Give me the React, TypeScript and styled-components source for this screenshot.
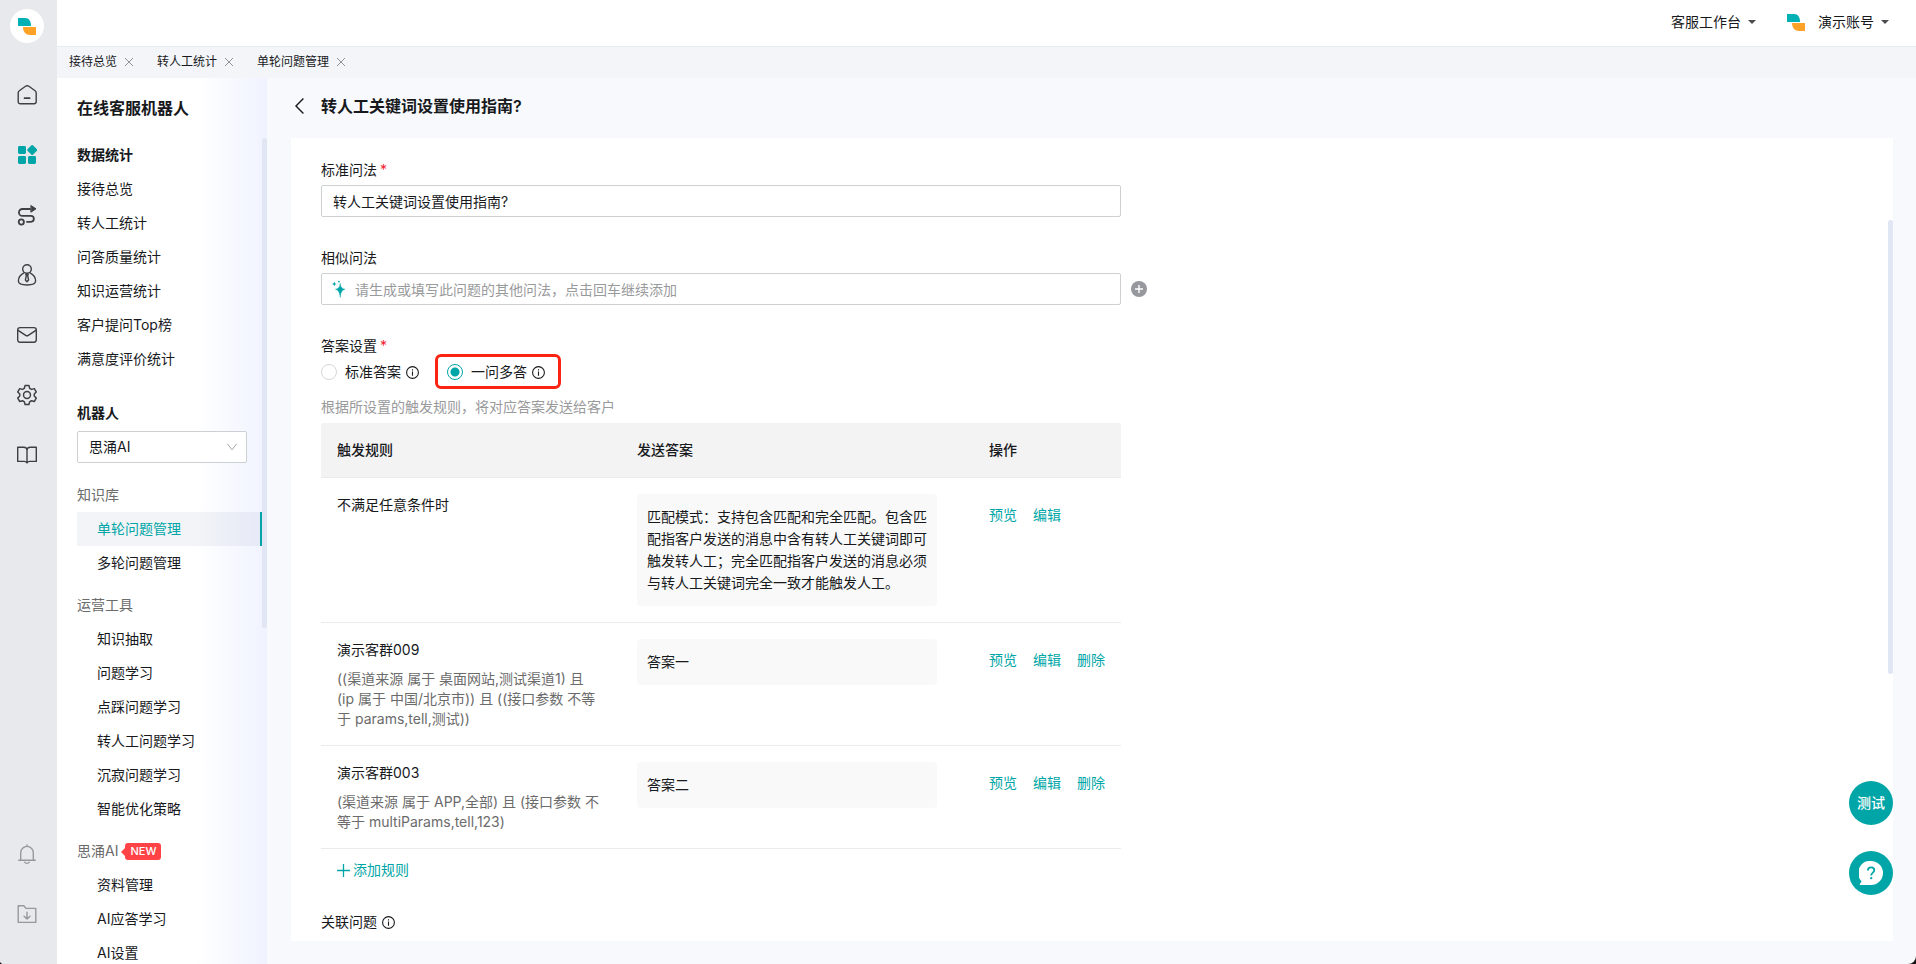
import React, { useState } from 'react';
import styled, { createGlobalStyle, css } from 'styled-components';

const color = {
  teal: '#00a6a7',
  text: '#17191c',
  muted: '#6b6b6b',
  faint: '#999a9c',
  border: '#ccd0d2',
  line: '#ebebeb',
};

const GlobalStyle = createGlobalStyle`
  * { box-sizing: border-box; }
  html { background: #1c1416; }
  body {
    margin: 0;
    font-family: Inter, 'Noto Sans CJK SC', sans-serif;
    font-size: 14px;
    line-height: 22px;
    color: ${color.text};
  }
  button, input, select { font: inherit; color: inherit; }
  button { padding: 0; border: 0; background: none; cursor: pointer; }
  a { color: inherit; text-decoration: none; }
  h1, h2, h3, p, ul { margin: 0; padding: 0; font-weight: inherit; font-size: inherit; }
  ul { list-style: none; }
`;

const Shell = styled.div`
  display: flex;
  height: 100vh;
  overflow: hidden;
  border-radius: 0 0 8px 4px;
  background: #f8f9fc;
`;

/* ---------- icon rail ---------- */

const Rail = styled.nav`
  display: flex;
  flex-direction: column;
  align-items: center;
  flex: 0 0 57px;
  padding: 9px 3px 0 0;
  background: #e8e9ed;
  color: #3d3f42;
`;

const Avatar = styled.a`
  display: grid;
  place-items: center;
  width: 34px;
  height: 34px;
  margin-bottom: 22px;
  border-radius: 50%;
  background: #fff;
`;

const RailLink = styled.a<{ $active?: boolean; $dim?: boolean }>`
  display: grid;
  place-items: center;
  width: 54px;
  height: 60px;
  ${(p) => p.$active && css`color: ${color.teal};`}
  ${(p) => p.$dim && css`color: #96989c;`}
`;

const RailSpacer = styled.div`
  flex: 1;
`;

const RailBottom = styled.div`
  padding-bottom: 20px;
`;

/* ---------- top area ---------- */

const Body = styled.div`
  display: flex;
  flex: 1;
  flex-direction: column;
  min-width: 0;
`;

const Header = styled.header`
  display: flex;
  flex: 0 0 46px;
  align-items: center;
  justify-content: flex-end;
  gap: 31px;
  padding: 0 27px 2px 0;
  background: #fff;
`;

const HeaderButton = styled.button`
  display: flex;
  align-items: center;
  gap: 7px;

  > span { margin-left: 6px; }
`;

const TabBar = styled.div`
  display: flex;
  flex: 0 0 32px;
  align-items: center;
  gap: 24px;
  padding: 0 12px 2px;
  border-top: 1px solid #e6ebf0;
  background: #f4f5f8;
  font-size: 12px;
  line-height: 20px;
`;

const Tab = styled.div`
  display: flex;
  align-items: center;
  gap: 8px;
`;

const CloseButton = styled.button`
  display: flex;
  color: #909399;
`;

const Columns = styled.div`
  display: flex;
  flex: 1;
  min-height: 0;
`;

/* ---------- side menu ---------- */

const Side = styled.aside`
  display: flex;
  flex: 0 0 210px;
  flex-direction: column;
  background: linear-gradient(90deg, #fff 66%, #f0f3ff 100%);
`;

const SideTitle = styled.h2`
  padding: 0 20px;
  font-size: 16px;
  font-weight: 600;
  line-height: 60px;
`;

const ScrollArea = styled.div`
  position: relative;
  flex: 1;
  min-height: 0;
`;

const Scroller = styled.div`
  height: 100%;
  overflow-y: auto;
  scrollbar-width: none;
`;

const Thumb = styled.div<{ $top: string; $height: string }>`
  position: absolute;
  top: ${(p) => p.$top};
  right: 0;
  width: 5px;
  height: ${(p) => p.$height};
  border-radius: 3px;
  background: #e1e6f4;
`;

const Menu = styled.div`
  padding: 0 5px 0 20px;
`;

const MenuHeading = styled.h3<{ $strong?: boolean }>`
  display: flex;
  align-items: center;
  gap: 5px;
  height: 34px;
  color: ${(p) => (p.$strong ? color.text : color.muted)};
  font-weight: ${(p) => (p.$strong ? 600 : 400)};
`;

const MenuGroup = styled.section`
  margin-bottom: 8px;
`;

const RobotGroup = styled.section`
  padding: 12px 0 15px;
`;

const MenuItem = styled.a<{ $nested?: boolean; $active?: boolean }>`
  display: block;
  padding-left: ${(p) => (p.$nested ? 20 : 0)}px;
  line-height: 34px;
  ${(p) =>
    p.$active &&
    css`
      border-right: 2px solid ${color.teal};
      background: rgba(120, 130, 170, 0.09);
      color: ${color.teal};
    `}
`;

const NewBadge = styled.span`
  position: relative;
  margin-left: 2px;
  padding: 0 5px;
  border-radius: 3px;
  background: #ff4347;
  color: #fff;
  font-size: 11px;
  font-weight: 500;
  line-height: 17px;

  &::before {
    content: '';
    position: absolute;
    top: 5px;
    left: -4px;
    border: 4px solid transparent;
    border-left-width: 0;
    border-right-color: #ff4347;
  }
`;

const SelectBox = styled.div`
  display: grid;
  align-items: center;
  width: 170px;
  margin-top: 1px;

  > * { grid-area: 1 / 1; }
  > svg { justify-self: end; margin-right: 10px; color: #a3a6aa; pointer-events: none; }
`;

const Select = styled.select`
  width: 100%;
  height: 32px;
  padding: 0 11px;
  border: 1px solid ${color.border};
  border-radius: 2px;
  background: #fff;
  appearance: none;
`;

/* ---------- content ---------- */

const Main = styled.main`
  display: flex;
  flex: 1;
  flex-direction: column;
  min-width: 0;
  padding: 0 23px 23px 24px;
`;

const PageTitle = styled.div`
  display: flex;
  align-items: center;
  gap: 17px;
  height: 56px;
  margin-bottom: 4px;
  padding-left: 4px;
  font-size: 16px;
  font-weight: 600;
`;

const BackButton = styled.button`
  display: flex;
`;

const Panel = styled(ScrollArea)`
  background: #fff;
`;

const Form = styled.form`
  max-width: 860px;
  padding: 21px 30px 0;
`;

const Field = styled.div`
  display: flex;
  flex-direction: column;
  gap: 4px;
  margin-bottom: 30px;
`;

const Label = styled.label`
  display: flex;
  align-items: center;
  gap: 3px;
  padding: 0;
`;

const Star = styled.span`
  color: #f5222d;
`;

const InputRow = styled.div`
  position: relative;
  display: flex;
  align-items: center;
`;

const InputBox = styled.div`
  display: flex;
  align-items: center;
  gap: 8px;
  width: 100%;
  height: 32px;
  padding: 0 11px 0 10px;
  border: 1px solid ${color.border};
  border-radius: 2px;
`;

const TextInput = styled.input`
  flex: 1;
  min-width: 0;
  height: 28px;
  padding: 0 1px;
  border: 0;
  outline: 0;
  background: none;

  &::placeholder { color: ${color.faint}; opacity: 1; }
`;

const AddButton = styled.button`
  position: absolute;
  left: calc(100% + 10px);
  display: flex;
`;

const Fieldset = styled.fieldset`
  margin: 0;
  padding: 0;
  border: 0;
`;

const RadioRow = styled.div`
  display: flex;
  gap: 28px;
  padding: 4px 0 13px;
`;

const RadioLabel = styled.label<{ $marked?: boolean }>`
  position: relative;
  display: flex;
  align-items: center;
  gap: 8px;
  cursor: pointer;

  ${(p) =>
    p.$marked &&
    css`
      &::after {
        content: '';
        position: absolute;
        inset: -7px -16px -6px -12px;
        border: 3px solid #fb2413;
        border-radius: 6px;
        pointer-events: none;
      }
    `}
`;

const RadioText = styled.span`
  display: flex;
  align-items: center;
  gap: 5px;
`;

const Radio = styled.input`
  width: 16px;
  height: 16px;
  margin: 0;
  border: 1px solid #d4d6d8;
  border-radius: 50%;
  background: #fff;
  appearance: none;

  &:checked {
    border-color: ${color.teal};
    background: radial-gradient(circle, ${color.teal} 4px, #fff 5px);
  }
`;

const Hint = styled.p`
  padding-bottom: 5px;
  color: ${color.faint};
`;

const Table = styled.table`
  width: 100%;
  border-collapse: separate;
  border-spacing: 0;
  table-layout: fixed;
  text-align: left;
`;

const HeadCell = styled.th<{ $width?: number }>`
  width: ${(p) => (p.$width ? `${p.$width}px` : 'auto')};
  padding: 16px;
  border-bottom: 1px solid ${color.line};
  background: #f3f3f3;
  font-weight: 500;

  &:first-child { border-top-left-radius: 2px; }
  &:last-child { border-top-right-radius: 2px; }
`;

const Cell = styled.td`
  padding: 16px;
  border-bottom: 1px solid ${color.line};
  vertical-align: top;
`;

const Condition = styled.p`
  margin-top: 8px;
  padding-right: 4px;
  color: ${color.muted};
  line-height: 20px;
`;

const Answer = styled.div`
  width: 300px;
  padding: 12px 10px;
  border-radius: 4px;
  background: #f9f9f9;
`;

const Actions = styled.div`
  display: flex;
  gap: 16px;
  padding-top: 10px;
  color: ${color.teal};
`;

const AddRule = styled.button`
  display: flex;
  align-items: center;
  gap: 3px;
  margin: 10px 16px 30px;
  color: ${color.teal};
`;

const FloatStack = styled.div`
  position: fixed;
  right: 23px;
  bottom: 69px;
  display: flex;
  flex-direction: column;
  gap: 26px;
`;

const FloatButton = styled.button`
  display: grid;
  place-items: center;
  width: 44px;
  height: 44px;
  border-radius: 50%;
  background: ${color.teal};
  color: #fff;
  font-weight: 500;
`;

/* ---------- drawings ---------- */

const Logo = () => (
  <svg width="18" height="17" viewBox="0 0 18 17" aria-hidden="true">
    <path d="M0 0h7c4 0 6 3 6 8H0z" fill="#00b0b5" />
    <path d="M5 9h13v8h-6c-4 0-7-3-7-8z" fill="#ffa227" />
  </svg>
);

type LineProps = { children: React.ReactNode; size?: number; stroke?: number };

const Line = ({ children, size = 22, stroke = 1.4 }: LineProps) => (
  <svg
    width={size}
    height={size}
    viewBox={`0 0 ${size} ${size}`}
    fill="none"
    stroke="currentColor"
    strokeWidth={stroke}
    strokeLinecap="round"
    strokeLinejoin="round"
    aria-hidden="true"
  >
    {children}
  </svg>
);

const HomeIcon = () => (
  <Line>
    <path d="M2.2 8.8c0-.9.4-1.6 1.1-2.1l6.2-4.4c1.1-.8 2.3-.8 3.4 0l6.2 4.4c.7.5 1.1 1.2 1.1 2.1v8.8c0 1.4-.9 2.2-2.2 2.2H4.4c-1.3 0-2.2-.8-2.2-2.2z" />
    <path d="M8.6 14.2h5" strokeWidth="1.8" />
  </Line>
);

const AppsIcon = () => (
  <svg width="22" height="22" viewBox="0 0 22 22" fill="currentColor" aria-hidden="true">
    <rect x="2" y="2" width="8" height="8" rx="1.4" />
    <rect x="2" y="12" width="8" height="8" rx="1.4" />
    <rect x="12" y="12" width="8" height="8" rx="1.4" />
    <path d="M15.2 1.4a1.4 1.4 0 0 1 2 0l3.5 3.6a1.4 1.4 0 0 1 0 2l-3.5 3.5a1.4 1.4 0 0 1-2 0l-3.5-3.5a1.4 1.4 0 0 1 0-2z" />
  </svg>
);

const RouteIcon = () => (
  <Line stroke={1.8}>
    <circle cx="5.3" cy="18" r="2.6" />
    <path d="M14 5H6.400a3.4 3.4 0 0 0 0 6.9h8.5a2.9 2.9 0 0 1 0 5.9H11" />
    <path d="M15.2 1.7 20 4.8l-4.8 3.2z" fill="currentColor" strokeWidth="1" />
  </Line>
);

const PersonIcon = () => (
  <Line>
    <circle cx="11" cy="5" r="4.3" />
    <path d="M8 8.900c-3.3 1.6-5.6 4.7-5.6 8.2 0 2.6 3.4 3.9 8.6 3.9s8.6-1.3 8.600-3.9c0-3.5-2.3-6.6-5.6-8.2" />
    <path d="M9.8 10.2h2.4l-.5 1.6.9 4.2-1.6 1.8-1.600-1.8.9-4.2z" />
  </Line>
);

const MailIcon = () => (
  <Line>
    <rect x="1.7" y="3.6" width="18.6" height="14.6" rx="2.4" />
    <path d="M2.5 6.6 9.7 11.4c.9.6 1.7.6 2.6 0l7.2-4.8" />
  </Line>
);

const GearIcon = () => (
  <svg
    width="22"
    height="22"
    viewBox="0 0 24 24"
    fill="none"
    stroke="currentColor"
    strokeWidth="1.6"
    strokeLinejoin="round"
    aria-hidden="true"
  >
    <path d="M9.900 1.700h4.200l.8 3 2 1.200 3-.9 2.200 3.700-2.200 2.200v2.300l2.200 2.200-2.200 3.700-3-.9-2 1.200-.8 3H9.900l-.8-3-2-1.200-3 .9-2.200-3.700 2.200-2.200v-2.300L1.900 8.700 4.100 5l3 .9 2-1.200z" />
    <circle cx="12" cy="12" r="3.8" />
  </svg>
);

const BookIcon = () => (
  <Line>
    <path d="M1.7 3.3h6.1c2 0 3.2 1.2 3.2 3v12.6c-.6-1-1.5-1.5-2.8-1.5H1.700zM20.300 3.300h-6.100c-2 0-3.200 1.200-3.200 3v12.600c.6-1 1.500-1.500 2.800-1.500h6.500z" />
  </Line>
);

const BellIcon = () => (
  <Line>
    <path d="M11 2v1.400M4.700 17.200V9.700a6.300 6.300 0 0 1 12.600 0v7.500M2.700 17.300h16.600M8.600 19.200c.6.800 1.400 1.200 2.400 1.200s1.800-.4 2.400-1.200" />
  </Line>
);

const FolderIcon = () => (
  <Line>
    <path d="M2.200 2.800h5.600l2.200 2.600h9.800v14H2.200z" />
    <path d="M11 9.200v6.800M8 13.200l3 2.900 3-2.900" />
  </Line>
);

const CloseIcon = () => (
  <svg width="8" height="8" viewBox="0 0 8 8" stroke="currentColor" aria-hidden="true">
    <path d="m0 0 8 8M8 0 0 8" />
  </svg>
);

const CaretIcon = () => (
  <svg width="8" height="4" viewBox="0 0 8 4" fill="#4a4c50" aria-hidden="true">
    <path d="M0 0h8L4 4z" />
  </svg>
);

const ChevronDown = () => (
  <svg width="10" height="8" viewBox="0 0 10 8" fill="none" stroke="currentColor" aria-hidden="true">
    <path d="m.4.8 4.600 6 4.600-6" />
  </svg>
);

const BackIcon = () => (
  <svg width="9" height="16" viewBox="0 0 9 16" fill="none" stroke="currentColor" strokeWidth="1.4" aria-hidden="true">
    <path d="M8.4.6 1 8l7.4 7.4" />
  </svg>
);

const InfoIcon = () => (
  <svg width="13" height="13" viewBox="0 0 13 13" fill="none" stroke="currentColor" aria-hidden="true">
    <circle cx="6.5" cy="6.5" r="5.9" strokeWidth="1.1" />
    <path d="M6.5 5.6v4.200M6.500 3.300v1.200" strokeWidth="1.1" />
  </svg>
);

const SparkIcon = () => (
  <svg width="14" height="18" viewBox="0 0 14 18" fill={color.teal} aria-hidden="true">
    <path d="M8.200 3.200Q8.500 8.600 13 9.200 8.700 9.900 8.200 17.400 7.700 9.900 3.400 9.200 7.900 8.600 8.200 3.200z" stroke={color.teal} strokeWidth=".4" />
    <path d="M2.300 1.400q.2 2.200 2.200 2.500-2 .3-2.200 2.400Q2.100 4.200 0 3.900q2.100-.3 2.300-2.500z" />
    <circle cx="6.900" cy="1.600" r=".9" />
  </svg>
);

const PlusCircleIcon = () => (
  <svg width="16" height="16" viewBox="0 0 16 16" aria-hidden="true">
    <circle cx="8" cy="8" r="8" fill="#96989d" />
    <path d="M8 4v8M4 8h8" stroke="#fff" strokeWidth="1.4" />
  </svg>
);

const PlusIcon = () => (
  <svg width="13" height="13" viewBox="0 0 13 13" stroke="currentColor" strokeWidth="1.3" aria-hidden="true">
    <path d="M6.5 0v13M0 6.5h13" />
  </svg>
);

const HelpIcon = () => (
  <svg width="24" height="24" viewBox="0 0 24 24" fill="none" aria-hidden="true">
    <path d="M12 0a12 12 0 1 1 0 24H1.300c-.6 0-.8-.7-.3-1.200l1.600-2.400A12 12 0 0 1 12 0z" fill="#fff" />
    <path
      d="M8.900 9.400c0-1.900 1.300-3 3.200-3s3.200 1.100 3.200 2.800c0 2.400-3.100 2.400-3.100 5.200"
      stroke={color.teal}
      strokeWidth="1.8"
    />
    <circle cx="12.2" cy="17.1" r="1.2" fill={color.teal} />
  </svg>
);

/* ---------- data ---------- */

const tabs = ['接待总览', '转人工统计', '单轮问题管理'];

const railItems = [
  { label: '首页', icon: <HomeIcon /> },
  { label: '应用', icon: <AppsIcon />, active: true },
  { label: '流程', icon: <RouteIcon /> },
  { label: '客户', icon: <PersonIcon /> },
  { label: '邮件', icon: <MailIcon /> },
  { label: '设置', icon: <GearIcon /> },
  { label: '文档', icon: <BookIcon /> },
];

const statItems = ['接待总览', '转人工统计', '问答质量统计', '知识运营统计', '客户提问Top榜', '满意度评价统计'];

const menuGroups = [
  { title: '知识库', items: ['单轮问题管理', '多轮问题管理'] },
  {
    title: '运营工具',
    items: ['知识抽取', '问题学习', '点踩问题学习', '转人工问题学习', '沉寂问题学习', '智能优化策略'],
  },
  { title: '思涌AI', isNew: true, items: ['资料管理', 'AI应答学习', 'AI设置'] },
];

const rules = [
  {
    name: '不满足任意条件时',
    answer:
      '匹配模式：支持包含匹配和完全匹配。包含匹配指客户发送的消息中含有转人工关键词即可触发转人工；完全匹配指客户发送的消息必须与转人工关键词完全一致才能触发人工。',
    actions: ['预览', '编辑'],
  },
  {
    name: '演示客群009',
    condition: '((渠道来源 属于 桌面网站,测试渠道1) 且 (ip 属于 中国/北京市)) 且 ((接口参数 不等于 params,tell,测试))',
    answer: '答案一',
    actions: ['预览', '编辑', '删除'],
  },
  {
    name: '演示客群003',
    condition: '(渠道来源 属于 APP,全部) 且 (接口参数 不等于 multiParams,tell,123)',
    answer: '答案二',
    actions: ['预览', '编辑', '删除'],
  },
];

export default function App() {
  const [mode, setMode] = useState('multi');
  const [question, setQuestion] = useState('转人工关键词设置使用指南?');

  return (
    <>
      <GlobalStyle />
      <Shell>
        <Rail>
          <Avatar href="#" aria-label="主页">
            <Logo />
          </Avatar>
          {railItems.map((item) => (
            <RailLink key={item.label} href="#" aria-label={item.label} $active={item.active}>
              {item.icon}
            </RailLink>
          ))}
          <RailSpacer />
          <RailBottom>
            <RailLink href="#" aria-label="通知" $dim>
              <BellIcon />
            </RailLink>
            <RailLink href="#" aria-label="下载" $dim>
              <FolderIcon />
            </RailLink>
          </RailBottom>
        </Rail>

        <Body>
          <Header>
            <HeaderButton type="button">
              客服工作台
              <CaretIcon />
            </HeaderButton>
            <HeaderButton type="button">
              <Logo />
              <span>演示账号</span>
              <CaretIcon />
            </HeaderButton>
          </Header>
          <TabBar>
            {tabs.map((tab) => (
              <Tab key={tab}>
                <a href="#">{tab}</a>
                <CloseButton type="button" aria-label={`关闭${tab}`}>
                  <CloseIcon />
                </CloseButton>
              </Tab>
            ))}
          </TabBar>

          <Columns>
            <Side>
              <SideTitle>在线客服机器人</SideTitle>
              <ScrollArea>
                <Scroller>
                  <Menu>
                    <MenuGroup>
                      <MenuHeading $strong>数据统计</MenuHeading>
                      {statItems.map((item) => (
                        <MenuItem key={item} href="#">
                          {item}
                        </MenuItem>
                      ))}
                    </MenuGroup>
                    <RobotGroup>
                      <MenuHeading $strong as="label" htmlFor="robot">
                        机器人
                      </MenuHeading>
                      <SelectBox>
                        <Select id="robot" defaultValue="思涌AI">
                          <option>思涌AI</option>
                        </Select>
                        <ChevronDown />
                      </SelectBox>
                    </RobotGroup>
                    {menuGroups.map((group) => (
                      <MenuGroup key={group.title}>
                        <MenuHeading>
                          {group.title}
                          {group.isNew && <NewBadge>NEW</NewBadge>}
                        </MenuHeading>
                        {group.items.map((item) => (
                          <MenuItem key={item} href="#" $nested $active={item === '单轮问题管理'}>
                            {item}
                          </MenuItem>
                        ))}
                      </MenuGroup>
                    ))}
                  </Menu>
                </Scroller>
                <Thumb $top="0" $height="490px" />
              </ScrollArea>
            </Side>

            <Main>
              <PageTitle>
                <BackButton type="button" aria-label="返回">
                  <BackIcon />
                </BackButton>
                <h1>转人工关键词设置使用指南?</h1>
              </PageTitle>
              <Panel>
                <Scroller>
                  <Form onSubmit={(e) => e.preventDefault()}>
                    <Field>
                      <Label htmlFor="question">
                        标准问法<Star>*</Star>
                      </Label>
                      <InputBox>
                        <TextInput id="question" value={question} onChange={(e) => setQuestion(e.target.value)} />
                      </InputBox>
                    </Field>
                    <Field>
                      <Label htmlFor="similar">相似问法</Label>
                      <InputRow>
                        <InputBox>
                          <SparkIcon />
                          <TextInput id="similar" placeholder="请生成或填写此问题的其他问法，点击回车继续添加" />
                        </InputBox>
                        <AddButton type="button" aria-label="添加问法">
                          <PlusCircleIcon />
                        </AddButton>
                      </InputRow>
                    </Field>
                    <Fieldset>
                      <Label as="legend">
                        答案设置<Star>*</Star>
                      </Label>
                      <RadioRow>
                        <RadioLabel>
                          <Radio
                            type="radio"
                            name="mode"
                            checked={mode === 'single'}
                            onChange={() => setMode('single')}
                          />
                          <RadioText>
                            标准答案
                            <InfoIcon />
                          </RadioText>
                        </RadioLabel>
                        <RadioLabel $marked>
                          <Radio
                            type="radio"
                            name="mode"
                            checked={mode === 'multi'}
                            onChange={() => setMode('multi')}
                          />
                          <RadioText>
                            一问多答
                            <InfoIcon />
                          </RadioText>
                        </RadioLabel>
                      </RadioRow>
                      <Hint>根据所设置的触发规则，将对应答案发送给客户</Hint>
                    </Fieldset>
                    <Table>
                      <thead>
                        <tr>
                          <HeadCell $width={300}>触发规则</HeadCell>
                          <HeadCell $width={352}>发送答案</HeadCell>
                          <HeadCell>操作</HeadCell>
                        </tr>
                      </thead>
                      <tbody>
                        {rules.map((rule) => (
                          <tr key={rule.name}>
                            <Cell>
                              {rule.name}
                              {rule.condition && <Condition>{rule.condition}</Condition>}
                            </Cell>
                            <Cell>
                              <Answer>{rule.answer}</Answer>
                            </Cell>
                            <Cell>
                              <Actions>
                                {rule.actions.map((action) => (
                                  <a key={action} href="#">
                                    {action}
                                  </a>
                                ))}
                              </Actions>
                            </Cell>
                          </tr>
                        ))}
                      </tbody>
                    </Table>
                    <AddRule type="button">
                      <PlusIcon />
                      添加规则
                    </AddRule>
                    <RadioText>
                      关联问题
                      <InfoIcon />
                    </RadioText>
                  </Form>
                </Scroller>
                <Thumb $top="82px" $height="454px" />
              </Panel>
            </Main>
          </Columns>
        </Body>

        <FloatStack>
          <FloatButton type="button">测试</FloatButton>
          <FloatButton type="button" aria-label="帮助">
            <HelpIcon />
          </FloatButton>
        </FloatStack>
      </Shell>
    </>
  );
}
